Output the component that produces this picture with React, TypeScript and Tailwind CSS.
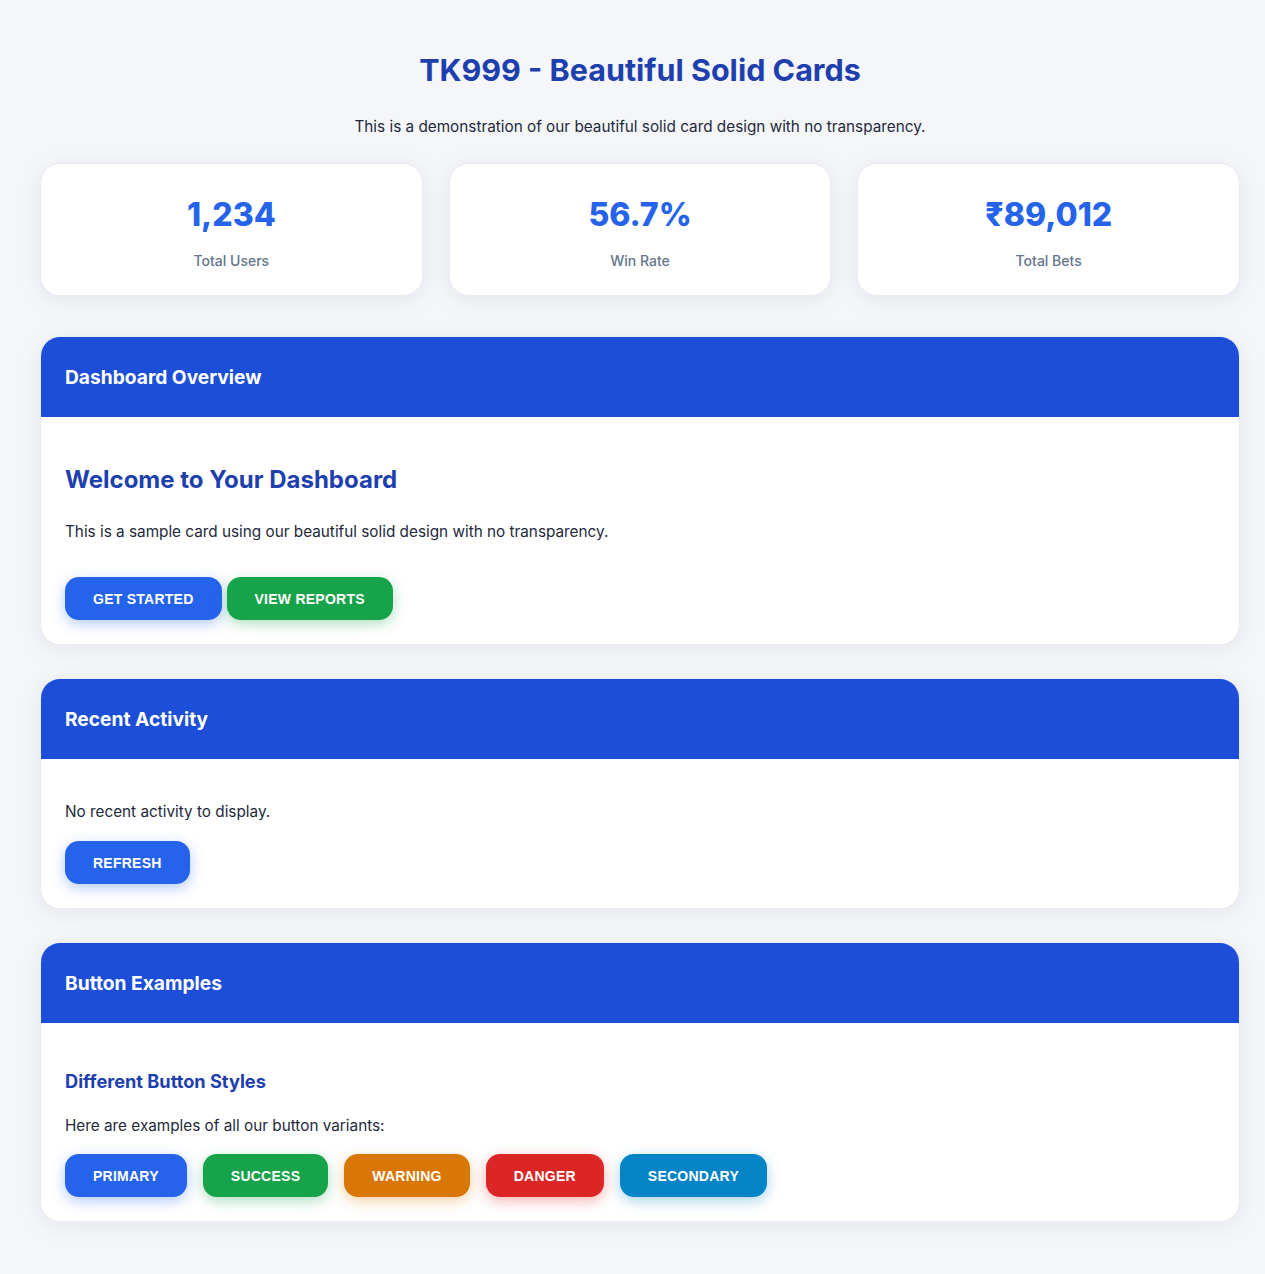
import React from "react"

type Variant = "primary" | "success" | "warning" | "danger" | "secondary"

const variants: Record<Variant, string> = {
  primary: "bg-[#2563eb] shadow-[0_4px_14px_rgba(37,99,235,0.35)]",
  success: "bg-[#16a34a] shadow-[0_4px_14px_rgba(22,163,74,0.35)]",
  warning: "bg-[#d97706] shadow-[0_4px_14px_rgba(217,119,6,0.35)]",
  danger: "bg-[#dc2626] shadow-[0_4px_14px_rgba(220,38,38,0.35)]",
  secondary: "bg-[#0284c7] shadow-[0_4px_14px_rgba(2,132,199,0.35)]",
}

function Button({ variant = "primary", children }: { variant?: Variant; children: React.ReactNode }) {
  return (
    <button
      className={`${variants[variant]} h-[43px] px-7 rounded-[14px] text-white text-[14px] font-bold uppercase tracking-[0.25px] font-['Liberation_Sans',Arial,sans-serif] leading-none`}
    >
      {children}
    </button>
  )
}

function Card({ title, children }: { title: string; children: React.ReactNode }) {
  return (
    <section className="bg-white rounded-[20px] border border-[#e9ecf2] overflow-hidden shadow-[0_4px_24px_rgba(15,23,42,0.07)]">
      <div className="h-[80px] bg-[#1d4ed8] flex items-center px-6">
        <h3 className="text-white text-[19.2px] font-bold">{title}</h3>
      </div>
      <div className="px-6 pb-6">{children}</div>
    </section>
  )
}

export default function App() {
  const stats = [
    { value: "1,234", label: "Total Users" },
    { value: "56.7%", label: "Win Rate" },
    { value: "₹89,012", label: "Total Bets" },
  ]

  return (
    <div className="min-h-screen bg-[#f5f6fa] font-['Inter','Noto_Sans',sans-serif] text-[#1e293b]">
      <div className="w-[1200px] ml-[40px] pt-[52px] pb-[54px]">
        <h1 className="text-center text-[30.5px] leading-[36px] font-bold text-[#1e40af]">
          TK999 - Beautiful Solid Cards
        </h1>
        <p className="text-center text-[15.3px] leading-[24px] mt-[27px]">
          This is a demonstration of our beautiful solid card design with no transparency.
        </p>

        <div className="grid grid-cols-3 gap-[26px] mt-[24px]">
          {stats.map((s) => (
            <div
              key={s.label}
              className="bg-white rounded-[20px] border border-[#e9ecf2] text-center pt-[32px] pb-[24px] shadow-[0_4px_24px_rgba(15,23,42,0.07)]"
            >
              <div className="text-[32px] leading-[38px] font-extrabold text-[#2563eb]">{s.value}</div>
              <div className="mt-[16px] text-[14px] leading-[21px] font-medium text-[#64748b]">{s.label}</div>
            </div>
          ))}
        </div>

        <div className="mt-[40px] flex flex-col gap-[33px]">
          <Card title="Dashboard Overview">
            <h2 className="mt-[44px] text-[24px] leading-[38px] font-bold text-[#1e40af]">Welcome to Your Dashboard</h2>
            <p className="mt-[20px] text-[15.3px] leading-[26px]">
              This is a sample card using our beautiful solid design with no transparency.
            </p>
            <div className="mt-[32px] flex gap-[5px]">
              <Button>Get Started</Button>
              <Button variant="success">View Reports</Button>
            </div>
          </Card>

          <Card title="Recent Activity">
            <p className="mt-[40px] text-[15.3px] leading-[26px]">No recent activity to display.</p>
            <div className="mt-[16px] flex">
              <Button>Refresh</Button>
            </div>
          </Card>

          <Card title="Button Examples">
            <h3 className="mt-[43px] text-[18.2px] leading-[30px] font-bold text-[#1e40af]">Different Button Styles</h3>
            <p className="mt-[17px] text-[15.3px] leading-[26px]">Here are examples of all our button variants:</p>
            <div className="mt-[15px] flex gap-4">
              <Button>Primary</Button>
              <Button variant="success">Success</Button>
              <Button variant="warning">Warning</Button>
              <Button variant="danger">Danger</Button>
              <Button variant="secondary">Secondary</Button>
            </div>
          </Card>
        </div>
      </div>
    </div>
  )
}
